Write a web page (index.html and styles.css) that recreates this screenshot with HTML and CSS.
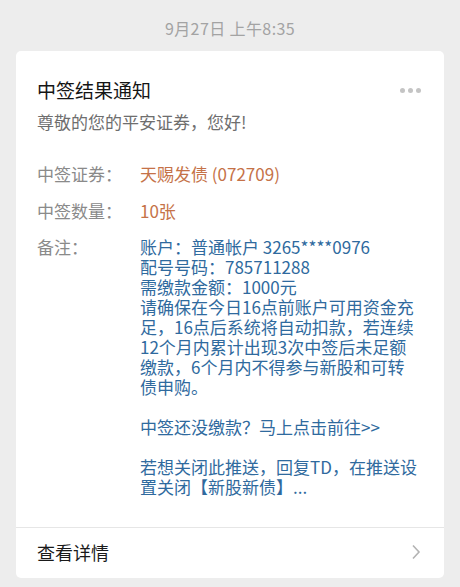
FILE: index.html
```html
<!DOCTYPE html>
<html lang="zh-CN">
<head>
<meta charset="utf-8">
<link rel="stylesheet" href="styles.css">
</head>
<body>
<div class="time">9月27日 上午8:35</div>
<div class="card">
  <div class="body">
    <div class="head">
      <div class="title">中签结果通知</div>
      <div class="dots"><span></span><span></span><span></span></div>
    </div>
    <div class="greet">尊敬的您的平安证券，您好!</div>
    <div class="row">
      <div class="label">中签证券：</div>
      <div class="value orange">天赐发债 (072709)</div>
    </div>
    <div class="row">
      <div class="label">中签数量：</div>
      <div class="value orange">10张</div>
    </div>
    <div class="row">
      <div class="label">备注：</div>
      <div class="value blue">账户：普通帐户 3265****0976<br>配号号码：785711288<br>需缴款金额：1000元<br>请确保在今日16点前账户可用资金充<br>足，16点后系统将自动扣款，若连续<br>12个月内累计出现3次中签后未足额<br>缴款，6个月内不得参与新股和可转<br>债申购。<br><br>中签还没缴款？马上点击前往&gt;&gt;<br><br>若想关闭此推送，回复TD，在推送设<br>置关闭【新股新债】...</div>
    </div>
  </div>
  <div class="foot">
    <span class="more">查看详情</span>
    <svg class="chev" width="10" height="16" viewBox="0 0 10 16"><path d="M2 1.5 L8 8 L2 14.5" fill="none" stroke="#b3b3b3" stroke-width="1.6"/></svg>
  </div>
</div>
</body>
</html>
```
FILE: styles.css
```css
html, body {
  margin: 0;
  padding: 0;
  background: #ededed;
  font-family: "Noto Sans CJK SC", "Noto Sans", sans-serif;
}
.time {
  text-align: center;
  font-size: 16px;
  letter-spacing: 0.4px;
  line-height: 20px;
  color: #a3a3a3;
  padding-top: 18px;
  height: 33px;
}
.card {
  margin: 0 16px;
  background: #fff;
  border-radius: 5px;
}
.body {
  padding: 26px 21px 30px 21px;
}
.head {
  display: flex;
  justify-content: space-between;
  align-items: center;
}
.title {
  font-size: 19px;
  line-height: 26px;
  color: #151515;
}
.dots {
  display: flex;
  gap: 3px;
  padding-right: 2px;
}
.dots span {
  width: 5px;
  height: 5px;
  border-radius: 50%;
  background: #c4c4c4;
}
.greet {
  margin-top: 7px;
  font-size: 17px;
  line-height: 24px;
  color: #6e6e6e;
  margin-bottom: 30px;
}
.row {
  display: flex;
  font-size: 17px;
  line-height: 20px;
  margin-bottom: 16.5px;
}
.row:last-child {
  margin-bottom: 0;
}
.label {
  width: 103px;
  flex: none;
  color: #8a8a8a;
}
.value {
  white-space: nowrap;
}
.orange {
  color: #c57248;
}
.blue {
  color: #2f6a9e;
}
.foot {
  border-top: 1px solid #e6e6e6;
  height: 48px;
  padding-bottom: 2px;
  display: flex;
  align-items: center;
  justify-content: space-between;
  padding-left: 21px;
  padding-right: 23px;
}
.more {
  font-size: 18px;
  color: #1a1a1a;
}
```
